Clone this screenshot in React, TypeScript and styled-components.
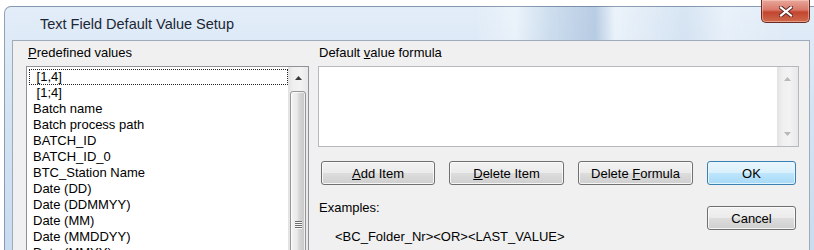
import React from "react";
import styled, { createGlobalStyle } from "styled-components";

const GlobalStyle = createGlobalStyle`
  html, body { margin: 0; padding: 0; background: #ffffff; }
  body { font-family: "Liberation Sans", Arial, sans-serif; font-size: 13px; color: #000; }
`;

const Page = styled.div`
  width: 814px;
  height: 250px;
  overflow: hidden;
  background: #ffffff;
`;

const Window = styled.div`
  position: relative;
  margin: 6px 0 0 4px;
  width: 840px;
  height: 270px;
  border: 1px solid rgba(50, 70, 100, 0.45);
  border-radius: 7px 7px 0 0;
  display: flex;
  flex-direction: column;
  background:
    linear-gradient(90deg,
      rgba(255,255,255,0) 0px,
      rgba(255,255,255,0) 470px,
      rgba(255,255,255,0.35) 510px,
      rgba(170,195,222,0.35) 545px,
      rgba(150,178,210,0.55) 590px,
      rgba(255,255,255,0.35) 610px,
      rgba(190,210,232,0.3) 680px,
      rgba(255,255,255,0.25) 720px,
      rgba(255,255,255,0) 780px),
    linear-gradient(180deg, #e2edf8 0%, #d3e3f3 40%, #c7dbef 100%);
`;

const TitleBar = styled.div`
  height: 33px;
  display: flex;
  align-items: center;
  padding-left: 35px;
  font-family: "Liberation Sans", Arial, sans-serif;
  font-size: 14.5px;
  color: #1c2634;
`;

const CloseButton = styled.div`
  position: absolute;
  left: 756px;
  top: -7px;
  width: 47px;
  height: 22px;
  border: 1px solid #6e2b25;
  border-top: none;
  border-radius: 0 0 5px 5px;
  background: linear-gradient(180deg, #e9a89a 0%, #d9786a 45%, #c2452f 55%, #cf6a4c 100%);
  box-shadow: inset 0 0 0 1px rgba(255, 220, 210, 0.45);
  display: flex;
  align-items: center;
  justify-content: center;
`;

const Client = styled.div`
  margin-left: 7px;
  width: 798px;
  flex: 1;
  box-sizing: border-box;
  background: #f0f0f0;
  border: 1px solid #9eabbb;
  display: grid;
  grid-template-columns: 283px 1fr;
  column-gap: 9px;
  padding: 4px 0 0 13px;
  align-items: start;
`;

const Column = styled.div`
  display: flex;
  flex-direction: column;
`;

const Label = styled.div<{ $indent: number }>`
  line-height: 15px;
  height: 15px;
  margin-bottom: 6px;
  padding-left: ${(p) => p.$indent}px;
  white-space: pre;
`;

const U = styled.span`
  text-decoration: underline;
  text-underline-offset: 1px;
`;

const ListBox = styled.div`
  height: 200px;
  box-sizing: border-box;
  border: 1px solid #8d9198;
  background: #ffffff;
  display: flex;
`;

const ListItems = styled.div`
  flex: 1;
  padding: 2px 0 0 2px;
  display: flex;
  flex-direction: column;
`;

const ListItem = styled.div<{ $focused?: boolean }>`
  height: 16px;
  box-sizing: border-box;
  line-height: 14px;
  padding-left: 3px;
  white-space: pre;
  border: 1px dotted ${(p) => (p.$focused ? "#222" : "transparent")};
`;

const ScrollBar = styled.div<{ $width: number }>`
  width: ${(p) => p.$width}px;
  flex: none;
  display: flex;
  flex-direction: column;
  background: linear-gradient(90deg, #e2e2e2 0%, #efefef 25%, #f3f3f3 60%, #e8e8e8 100%);
`;

const ArrowButton = styled.div<{ $height: number }>`
  height: ${(p) => p.$height}px;
  flex: none;
  display: flex;
  align-items: center;
  justify-content: center;
`;

const Spacer = styled.div`
  flex: 1;
`;

const Thumb = styled.div`
  margin: 3px 2px 0 2px;
  height: 300px;
  box-sizing: border-box;
  border: 1px solid #959595;
  border-radius: 3px;
  background: linear-gradient(90deg, #f4f4f4 0%, #e9e9e9 45%, #d8d8d8 55%, #c6c6c6 100%);
  box-shadow: inset 0 0 0 1px rgba(255,255,255,0.7);
  display: flex;
  flex-direction: column;
  align-items: center;
  padding-top: 129px;
`;

const Grip = styled.div`
  width: 7px;
  height: 8px;
  background: repeating-linear-gradient(180deg, #6e6e6e 0px, #6e6e6e 1px, #f8f8f8 1px, #f8f8f8 2px);
`;

const FormulaBox = styled.div`
  width: 481px;
  height: 81px;
  box-sizing: border-box;
  border: 1px solid #b4b8bf;
  background: #ffffff;
  display: flex;
`;

const FormulaText = styled.div`
  flex: 1;
`;

const ButtonGrid = styled.div`
  margin: 14px 0 0 3px;
  display: grid;
  grid-template-columns: 114px 115px 115px 89px;
  column-gap: 14px;
  row-gap: 15px;
  align-items: start;
`;

const Button = styled.div<{ $default?: boolean; $offset?: number }>`
  height: 24px;
  box-sizing: border-box;
  margin-top: ${(p) => p.$offset ?? 0}px;
  border: 1px solid ${(p) => (p.$default ? "#3c7fb1" : "#707070")};
  border-radius: 3px;
  background: ${(p) =>
    p.$default
      ? "linear-gradient(180deg, #eaf6fd 0%, #d9f0fc 50%, #bee6fd 50%, #a7d9f5 100%)"
      : "linear-gradient(180deg, #f2f2f2 0%, #ebebeb 50%, #dddddd 50%, #cfcfcf 100%)"};
  box-shadow: inset 0 0 0 1px ${(p) => (p.$default ? "rgba(230,246,255,0.9)" : "rgba(252,252,252,0.85)")};
  display: flex;
  align-items: center;
  justify-content: center;
  line-height: 15px;
  white-space: pre;
`;

const Examples = styled.div`
  grid-column: 1 / 4;
  margin-left: -2px;
  display: flex;
  flex-direction: column;
`;

const ExampleLine = styled.div<{ $indent: number; $top: number }>`
  line-height: 15px;
  margin-top: ${(p) => p.$top}px;
  padding-left: ${(p) => p.$indent}px;
  white-space: pre;
`;

const Arrow: React.FC<{ dir: "up" | "down"; color: string }> = ({ dir, color }) => (
  <svg width="7" height="4" viewBox="0 0 7 4">
    <path d={dir === "up" ? "M0 4 L3.5 0 L7 4 Z" : "M0 0 L3.5 4 L7 0 Z"} fill={color} />
  </svg>
);

const items = [
  " [1,4]",
  " [1;4]",
  "Batch name",
  "Batch process path",
  "BATCH_ID",
  "BATCH_ID_0",
  "BTC_Station Name",
  "Date (DD)",
  "Date (DDMMYY)",
  "Date (MM)",
  "Date (MMDDYY)",
  "Date (MMYY)",
];

export default function App() {
  return (
    <Page>
      <GlobalStyle />
      <Window>
        <TitleBar>Text Field Default Value Setup</TitleBar>
        <CloseButton>
          <svg width="14" height="11" viewBox="0 0 14 11">
            <path d="M2 1.5 L12 9.5 M12 1.5 L2 9.5" stroke="#5a2420" strokeWidth="4" strokeLinecap="square" />
            <path d="M2 1.5 L12 9.5 M12 1.5 L2 9.5" stroke="#ffffff" strokeWidth="2.2" strokeLinecap="square" />
          </svg>
        </CloseButton>
        <Client>
          <Column>
            <Label $indent={2}>
              <U>P</U>redefined values
            </Label>
            <ListBox>
              <ListItems>
                {items.map((it, i) => (
                  <ListItem key={it} $focused={i === 0}>
                    {it}
                  </ListItem>
                ))}
              </ListItems>
              <ScrollBar $width={20}>
                <ArrowButton $height={21}>
                  <Arrow dir="up" color="#3b3b3b" />
                </ArrowButton>
                <Thumb>
                  <Grip />
                </Thumb>
              </ScrollBar>
            </ListBox>
          </Column>
          <Column>
            <Label $indent={1}>
              Default <U>v</U>alue formula
            </Label>
            <FormulaBox>
              <FormulaText />
              <ScrollBar $width={21}>
                <ArrowButton $height={24}>
                  <Arrow dir="up" color="#b8b8b8" />
                </ArrowButton>
                <Spacer />
                <ArrowButton $height={24}>
                  <Arrow dir="down" color="#b8b8b8" />
                </ArrowButton>
              </ScrollBar>
            </FormulaBox>
            <ButtonGrid>
              <Button>
                <span>
                  <U>A</U>dd Item
                </span>
              </Button>
              <Button>
                <span>
                  <U>D</U>elete Item
                </span>
              </Button>
              <Button>
                <span>
                  Delete <U>F</U>ormula
                </span>
              </Button>
              <Button $default>OK</Button>
              <Examples>
                <ExampleLine $indent={0} $top={0}>Examples:</ExampleLine>
                <ExampleLine $indent={16} $top={14}>{"<BC_Folder_Nr><OR><LAST_VALUE>"}</ExampleLine>
              </Examples>
              <Button $offset={6}>Cancel</Button>
            </ButtonGrid>
          </Column>
        </Client>
      </Window>
    </Page>
  );
}
